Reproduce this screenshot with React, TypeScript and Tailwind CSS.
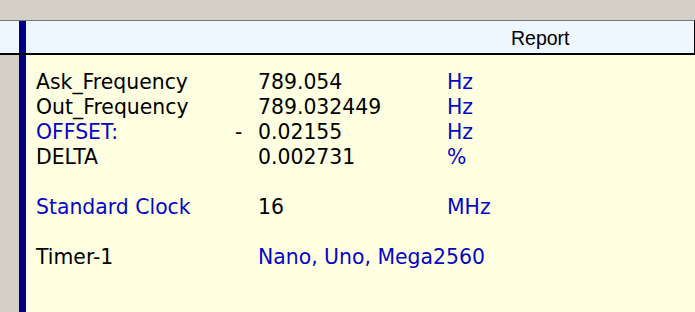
import React from 'react';

type Row = {
  label?: string;
  labelBlue?: boolean;
  sign?: string;
  value?: string;
  valueBlue?: boolean;
  unit?: string;
};

const rows: Row[] = [
  { label: 'Ask_Frequency', value: '789.054', unit: 'Hz' },
  { label: 'Out_Frequency', value: '789.032449', unit: 'Hz' },
  { label: 'OFFSET:', labelBlue: true, sign: '-', value: '0.02155', unit: 'Hz' },
  { label: 'DELTA', value: '0.002731', unit: '%' },
  {},
  { label: 'Standard Clock', labelBlue: true, value: '16', unit: 'MHz' },
  {},
  { label: 'Timer-1', value: 'Nano, Uno, Mega2560', valueBlue: true },
];

const App: React.FC = () => {
  return (
    <div className="w-[695px] h-[312px] overflow-hidden bg-[#d4d0c8] flex flex-col font-['DejaVu_Sans',sans-serif]">
      {/* Toolbar strip */}
      <div className="h-[20px] shrink-0" />

      {/* Header */}
      <div className="h-[35px] shrink-0 flex bg-[#eef6ff] border-t border-[#7a7a7a] border-b-2 border-b-black border-r border-r-black">
        <div className="w-[19px]" />
        <div className="w-[7px] bg-[#000080]" />
        <div className="flex-1 flex items-center pl-[485px] pt-[3px]">
          <span className="text-[19.5px] leading-none text-black font-['Liberation_Sans',sans-serif]">Report</span>
        </div>
      </div>

      {/* Body */}
      <div className="flex-1 flex">
        <div className="w-[19px]" />
        <div className="w-[7px] bg-[#000080]" />
        <div className="flex-1 bg-[#ffffe1] pl-[10px] pt-[15px]">
          <div className="grid grid-cols-[199px_23px_189px_1fr] text-[20.4px] leading-[25px] text-black">
            {rows.map((r, i) =>
              r.label ? (
                <React.Fragment key={i}>
                  <span className={r.labelBlue ? 'text-[#0505c8]' : ''}>{r.label}</span>
                  <span>{r.sign ?? ''}</span>
                  <span className={`whitespace-nowrap ${r.valueBlue ? 'text-[#0505c8]' : ''}`}>{r.value}</span>
                  <span className="text-[#0505c8]">{r.unit ?? ''}</span>
                </React.Fragment>
              ) : (
                <div key={i} className="col-span-4 h-[25px]" />
              )
            )}
          </div>
        </div>
      </div>
    </div>
  );
};

export default App;
